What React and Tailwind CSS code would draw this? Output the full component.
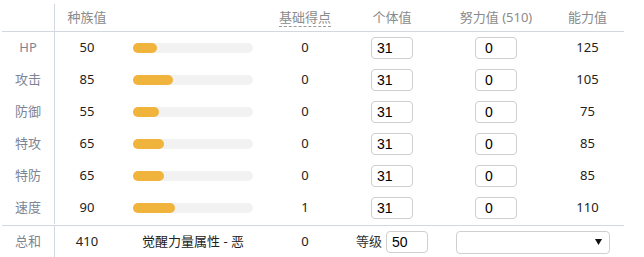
import React from "react";

const stats = [
  { label: "HP", base: 50, pt: 0, iv: 31, ev: 0, val: 125 },
  { label: "攻击", base: 85, pt: 0, iv: 31, ev: 0, val: 105 },
  { label: "防御", base: 55, pt: 0, iv: 31, ev: 0, val: 75 },
  { label: "特攻", base: 65, pt: 0, iv: 31, ev: 0, val: 85 },
  { label: "特防", base: 65, pt: 0, iv: 31, ev: 0, val: 85 },
  { label: "速度", base: 90, pt: 1, iv: 31, ev: 0, val: 110 },
];

const cols = "grid grid-cols-[53px_64px_148px_76px_98px_110px_73px]";
const font = "font-['Noto_Sans','Noto_Sans_CJK_SC',sans-serif]";

function NumBox({ value, pad = "pl-[5px]" }) {
  return (
    <div className={`w-[42px] h-[22px] rounded-[4px] border border-[#cfcfcf] bg-white flex items-center ${pad} font-['Liberation_Sans',sans-serif] text-[14px] text-black`}>
      {value}
    </div>
  );
}

export default function App() {
  return (
    <div className={`${font} text-[13px] pt-[4px] pl-[2px] w-[624px] bg-white`}>
      <div className={`${cols} h-[28px] border-b border-[#d3d8e0] text-[#8a8a8a]`}>
        <div className="border-r border-[#d3d8e0]" />
        <div className="flex items-center justify-center">种族值</div>
        <div />
        <div className="flex items-center justify-center">
          <span className="border-b border-dashed border-[#9a9a9a] leading-[17px]">基础得点</span>
        </div>
        <div className="flex items-center justify-center">个体值</div>
        <div className="flex items-center justify-center">努力值 (510)</div>
        <div className="flex items-center justify-center">能力值</div>
      </div>

      {stats.map((s) => (
        <div key={s.label} className={`${cols} h-[32px] text-[#222]`}>
          <div className="border-r border-[#d3d8e0] flex items-center justify-center text-[#7d8595]">
            {s.label}
          </div>
          <div className="flex items-center justify-center">{s.base}</div>
          <div className="flex items-center justify-center">
            <div className="w-[120px] h-[10px] rounded-full bg-[#f2f2f2]">
              <div
                className="h-full rounded-full bg-[#f0b33c]"
                style={{ width: `${(s.base / 255) * 120}px` }}
              />
            </div>
          </div>
          <div className="flex items-center justify-center">{s.pt}</div>
          <div className="flex items-center justify-center">
            <NumBox value={s.iv} />
          </div>
          <div className="flex items-center justify-center">
            <NumBox value={s.ev} pad="pl-[9px]" />
          </div>
          <div className="flex items-center justify-center">{s.val}</div>
        </div>
      ))}

      <div className={`${cols} h-[33px] mt-px border-t border-[#d3d8e0] text-[#222]`}>
        <div className="border-r border-[#d3d8e0] flex items-center justify-center text-[#7d8595]">
          总和
        </div>
        <div className="flex items-center justify-center">410</div>
        <div className="flex items-center justify-center">觉醒力量属性 - 恶</div>
        <div className="flex items-center justify-center">0</div>
        <div className="flex items-center justify-center gap-[4px]">
          <span className="text-[#333]">等级</span>
          <NumBox value={50} />
        </div>
        <div className="col-span-2 flex items-center justify-center">
          <div className="w-[154px] h-[23px] rounded-[4px] border border-[#cfcfcf] bg-white flex items-center justify-end pr-[7px]">
            <svg width="7" height="6" viewBox="0 0 7 6">
              <polygon points="0,0 7,0 3.5,6" fill="#111" />
            </svg>
          </div>
        </div>
      </div>
    </div>
  );
}
